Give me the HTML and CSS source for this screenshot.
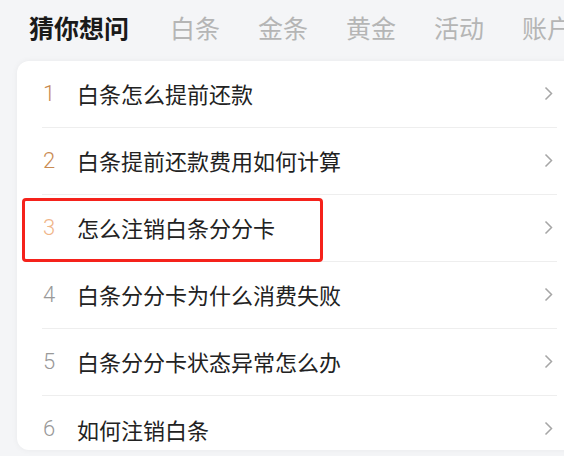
FILE: index.html
```html
<!DOCTYPE html>
<html lang="zh-CN">
<head>
    <meta charset="UTF-8">
    <meta name="viewport" content="width=device-width, initial-scale=1.0">
    <title>猜你想问</title>
    <link rel="stylesheet" href="styles.css">
</head>
<body>
    <div class="tabs">
        <span class="tab active">猜你想问</span>
        <span class="tab">白条</span>
        <span class="tab">金条</span>
        <span class="tab">黄金</span>
        <span class="tab">活动</span>
        <span class="tab">账户</span>
    </div>

    <div class="card">
        <div class="row">
            <span class="num gold">1</span>
            <span class="title">白条怎么提前还款</span>
            <svg class="arrow" width="9" height="15" viewBox="0 0 9 15"><path d="M1.5 1.5 L7.5 7.5 L1.5 13.5" fill="none" stroke="#a6a6a6" stroke-width="1.5"/></svg>
        </div>
        <div class="row">
            <span class="num gold">2</span>
            <span class="title">白条提前还款费用如何计算</span>
            <svg class="arrow" width="9" height="15" viewBox="0 0 9 15"><path d="M1.5 1.5 L7.5 7.5 L1.5 13.5" fill="none" stroke="#a6a6a6" stroke-width="1.5"/></svg>
        </div>
        <div class="row marked">
            <span class="num light">3</span>
            <span class="title">怎么注销白条分分卡</span>
            <svg class="arrow" width="9" height="15" viewBox="0 0 9 15"><path d="M1.5 1.5 L7.5 7.5 L1.5 13.5" fill="none" stroke="#a6a6a6" stroke-width="1.5"/></svg>
            <div class="highlight"></div>
        </div>
        <div class="row">
            <span class="num">4</span>
            <span class="title">白条分分卡为什么消费失败</span>
            <svg class="arrow" width="9" height="15" viewBox="0 0 9 15"><path d="M1.5 1.5 L7.5 7.5 L1.5 13.5" fill="none" stroke="#a6a6a6" stroke-width="1.5"/></svg>
        </div>
        <div class="row">
            <span class="num">5</span>
            <span class="title">白条分分卡状态异常怎么办</span>
            <svg class="arrow" width="9" height="15" viewBox="0 0 9 15"><path d="M1.5 1.5 L7.5 7.5 L1.5 13.5" fill="none" stroke="#a6a6a6" stroke-width="1.5"/></svg>
        </div>
        <div class="row">
            <span class="num">6</span>
            <span class="title">如何注销白条</span>
            <svg class="arrow" width="9" height="15" viewBox="0 0 9 15"><path d="M1.5 1.5 L7.5 7.5 L1.5 13.5" fill="none" stroke="#a6a6a6" stroke-width="1.5"/></svg>
        </div>
    </div>
</body>
</html>
```

FILE: styles.css
```css
body {
    margin: 0;
    padding: 0 0 0 17px;
    background-color: #f4f5f7;
    font-family: 'Noto Sans CJK SC', 'Noto Sans', sans-serif;
    color: #222;
    overflow: hidden;
    height: 456px;
}

.tabs {
    display: flex;
    align-items: center;
    gap: 38px;
    height: 54px;
    padding-left: 12px;
    white-space: nowrap;
}

.tab {
    font-size: 25px;
    line-height: 1;
    color: #b5b5b5;
}

.tab.active {
    color: #1a1a1a;
    font-weight: 700;
    margin-right: 3px;
}

.card {
    margin-top: 7px;
    width: 553px;
    height: 389px;
    background: #ffffff;
    border-radius: 12px 0 0 12px;
    box-shadow: 0 0 6px rgba(0, 0, 0, 0.05);
    overflow: hidden;
}

.row {
    position: relative;
    display: flex;
    align-items: center;
    height: 67px;
    box-sizing: border-box;
    margin: 0 13px 0 25px;
    padding-right: 4px;
    padding-bottom: 2px;
    border-bottom: 1px solid #eeeeee;
}

.row:last-child {
    border-bottom: none;
}

.num {
    width: 34px;
    font-family: 'Roboto', 'Noto Sans', sans-serif;
    font-weight: 300;
    font-size: 22px;
    color: #999999;
    padding-left: 1px;
}

.num.gold {
    color: #c98b52;
}

.num.light {
    color: #f0b589;
}

.title {
    flex: 1;
    font-size: 22px;
    color: #222222;
}

.arrow {
    display: block;
}

.highlight {
    position: absolute;
    left: -20px;
    top: 3px;
    width: 301px;
    height: 64px;
    box-sizing: border-box;
    border: 3px solid #f5221b;
    border-radius: 4px;
}
```
